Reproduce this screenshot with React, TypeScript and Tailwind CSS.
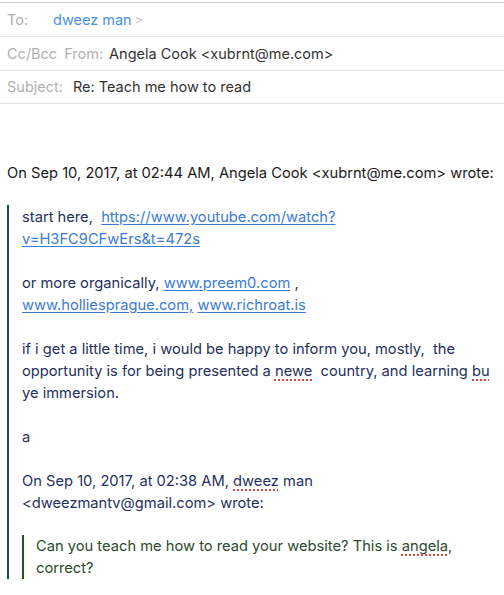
const font = { fontFamily: 'Inter, "Liberation Sans", sans-serif' };

function Misspelled({ children }: { children: string }) {
  return (
    <span className="underline decoration-dotted decoration-[#e0443a] decoration-2 underline-offset-[3px]">
      {children}
    </span>
  );
}

function Link({ children }: { children: string }) {
  return <span className="text-[#3b7bd4] underline underline-offset-[2px]">{children}</span>;
}

export default function App() {
  return (
    <div className="w-[504px] h-[595px] bg-white overflow-hidden text-[14.5px]" style={font}>
      {/* Header fields */}
      <div className="mt-[2px] border-t border-[#c8cdd2]">
        <div className="h-[34px] flex items-center px-[7px] border-b border-[#e4e4e4]">
          <span className="text-[#b0b0b0] w-[46px]">To:</span>
          <span className="text-[#4a90e2]">dweez man</span>
          <span className="text-[#c0c0c0] ml-[3px] text-[12px]">&gt;</span>
        </div>
        <div className="h-[34px] flex items-center px-[7px] border-b border-[#e4e4e4]">
          <span className="text-[#b0b0b0]">Cc/Bcc</span>
          <span className="text-[#b0b0b0] ml-[7px]">From:</span>
          <span className="text-[#333] ml-[6px]">Angela Cook &lt;xubrnt@me.com&gt;</span>
        </div>
        <div className="h-[33px] flex items-center px-[7px] border-b border-[#e4e4e4]">
          <span className="text-[#b0b0b0]">Subject:</span>
          <span className="text-[#333] ml-[10px]">Re: Teach me how to read</span>
        </div>
      </div>

      {/* Body */}
      <div className="px-[7px] pt-[58px] leading-[22px] text-[#1a1a1a] text-[14.7px]">
        <p className="whitespace-nowrap">On Sep 10, 2017, at 02:44 AM, Angela Cook &lt;xubrnt@me.com&gt; wrote:</p>

        <div className="mt-[21px] border-l-2 border-[#1c3f8c] pl-[13px] text-[#26305c]">
          <p className="pt-[1px]">
            start here,&nbsp; <Link>https://www.youtube.com/watch?</Link>
            <br />
            <Link>v=H3FC9CFwErs&amp;t=472s</Link>
          </p>
          <p className="mt-[22px]">
            or more organically, <Link>www.preem0.com</Link> ,
            <br />
            <Link>www.holliesprague.com,</Link> <Link>www.richroat.is</Link>
          </p>
          <p className="mt-[22px] whitespace-nowrap">
            if i get a little time, i would be happy to inform you, mostly,&nbsp; the
            <br />
            opportunity is for being presented a <Misspelled>newe</Misspelled>&nbsp; country, and learning{' '}
            <Misspelled>bu</Misspelled>
            <br />
            ye immersion.
          </p>
          <p className="mt-[22px]">a</p>
          <p className="mt-[22px]">
            On Sep 10, 2017, at 02:38 AM, <Misspelled>dweez</Misspelled> man
            <br />
            &lt;dweezmantv@gmail.com&gt; wrote:
          </p>
          <div className="mt-[21px] border-l-2 border-[#1f5a1f] pl-[12px] text-[#2c4a2c] whitespace-nowrap">
            Can you teach me how to read your website? This is <Misspelled>angela</Misspelled>,
            <br />
            correct?
          </div>
        </div>
      </div>
    </div>
  );
}
